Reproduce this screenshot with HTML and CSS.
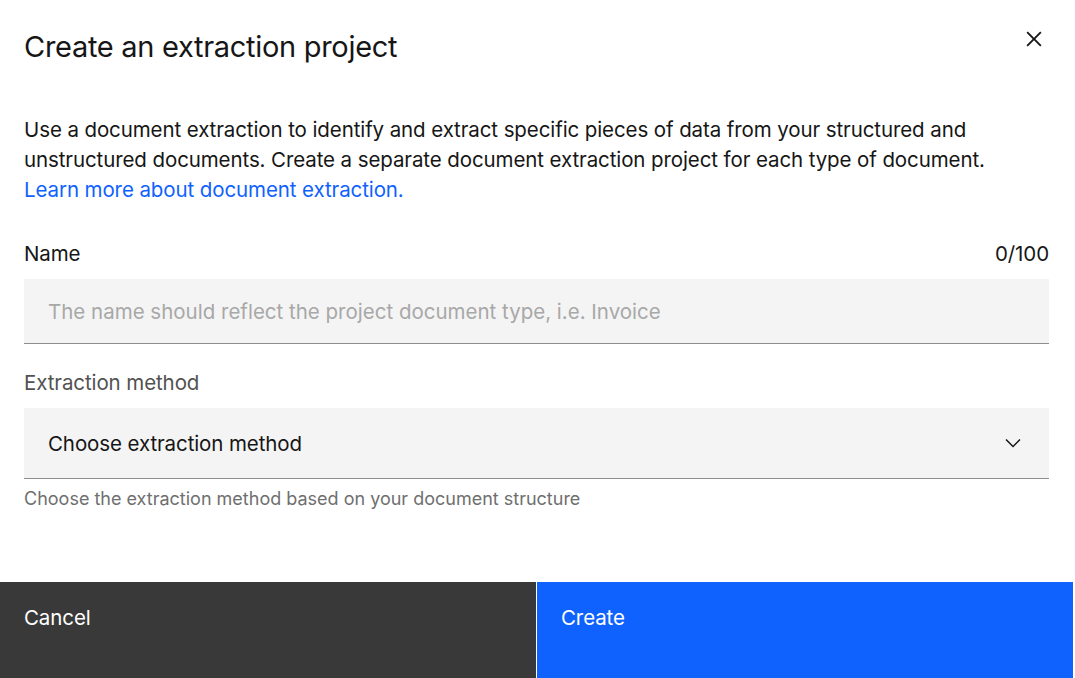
FILE: index.html
```html
<!DOCTYPE html>
<html lang="en">
<head>
<meta charset="utf-8">
<title>Create an extraction project</title>
<link rel="stylesheet" href="styles.css">
</head>
<body>
<div class="modal">
  <div class="modal-header">
    <h2 class="modal-title">Create an extraction project</h2>
    <button class="close-btn" aria-label="Close">
      <svg viewBox="0 0 32 32" width="30" height="30"><path d="M24 9.4L22.6 8 16 14.6 9.4 8 8 9.4 14.6 16 8 22.6 9.4 24 16 17.4 22.6 24 24 22.6 17.4 16 24 9.4z" fill="#161616"/></svg>
    </button>
  </div>
  <div class="modal-body">
    <p class="intro">Use a document extraction to identify and extract specific pieces of data from your structured and unstructured documents. Create a separate document extraction project for each type of document.<br><a href="#" class="link">Learn more about document extraction.</a></p>

    <div class="field field-name">
      <div class="label-row">
        <span class="label label-dark">Name</span>
        <span class="counter">0/100</span>
      </div>
      <div class="input">The name should reflect the project document type, i.e. Invoice</div>
    </div>

    <div class="field field-method">
      <div class="label-row">
        <span class="label">Extraction method</span>
      </div>
      <div class="select">
        <span class="select-value">Choose extraction method</span>
        <svg viewBox="0 0 16 16" width="24" height="24" class="chevron"><path d="M8 11L3 6 3.7 5.3 8 9.6 12.3 5.3 13 6z" fill="#161616"/></svg>
      </div>
      <div class="helper">Choose the extraction method based on your document structure</div>
    </div>
  </div>
  <div class="modal-footer">
    <button class="btn btn-secondary">Cancel</button>
    <button class="btn btn-primary">Create</button>
  </div>
</div>
</body>
</html>
```
FILE: styles.css
```css
* { box-sizing: border-box; }
html, body { margin: 0; padding: 0; background: #ffffff; }
body {
  font-family: "Inter", "Liberation Sans", Arial, sans-serif;
  color: #161616;
}
.modal {
  width: 1073px;
  height: 678px;
  display: flex;
  flex-direction: column;
  background: #ffffff;
}
.modal-header {
  display: flex;
  justify-content: space-between;
  align-items: flex-start;
  padding: 26px 24px 0 24px;
}
.modal-title {
  margin: 0;
  font-size: 29px;
  line-height: 42px;
  letter-spacing: -0.3px;
  font-weight: 400;
  color: #161616;
}
.close-btn {
  border: 0;
  background: none;
  padding: 0;
  margin-top: -2px;
  width: 30px;
  height: 30px;
  display: flex;
}
.modal-body {
  padding: 47px 24px 0 24px;
  flex: 1;
}
.intro {
  margin: 0;
  font-size: 20.5px;
  line-height: 30px;
  letter-spacing: -0.1px;
  color: #161616;
}
.link { color: #0f62fe; text-decoration: none; }
.field-name { margin-top: 37px; }
.field-method { margin-top: 27px; }
.label-row {
  display: flex;
  justify-content: space-between;
  font-size: 20.5px;
  line-height: 24px;
  letter-spacing: -0.1px;
  margin-bottom: 13px;
}
.label { color: #525252; }
.label-dark { color: #161616; }
.counter { color: #161616; }
.input {
  height: 65px;
  background: #f4f4f4;
  border-bottom: 1px solid #8d8d8d;
  padding: 0 24px;
  display: flex;
  align-items: center;
  font-size: 20.5px;
  letter-spacing: 0;
  color: #a8a8a8;
}
.select {
  height: 71px;
  background: #f4f4f4;
  border-bottom: 1px solid #8d8d8d;
  padding: 0 24px;
  display: flex;
  align-items: center;
  justify-content: space-between;
  font-size: 20.5px;
  letter-spacing: -0.1px;
  color: #161616;
}
.helper {
  margin-top: 10px;
  font-size: 18px;
  line-height: 20px;
  color: #6f6f6f;
  letter-spacing: 0;
}
.modal-footer {
  display: grid;
  grid-template-columns: 1fr 1fr;
  column-gap: 1px;
  height: 96px;
}
.btn {
  border: 0;
  margin: 0;
  font-family: inherit;
  font-size: 20.5px;
  line-height: 24px;
  letter-spacing: -0.1px;
  text-align: left;
  padding: 24px 24px 0 24px;
  display: flex;
  align-items: flex-start;
  color: #ffffff;
}
.btn-secondary { background: #393939; }
.btn-primary { background: #0f62fe; }
```
